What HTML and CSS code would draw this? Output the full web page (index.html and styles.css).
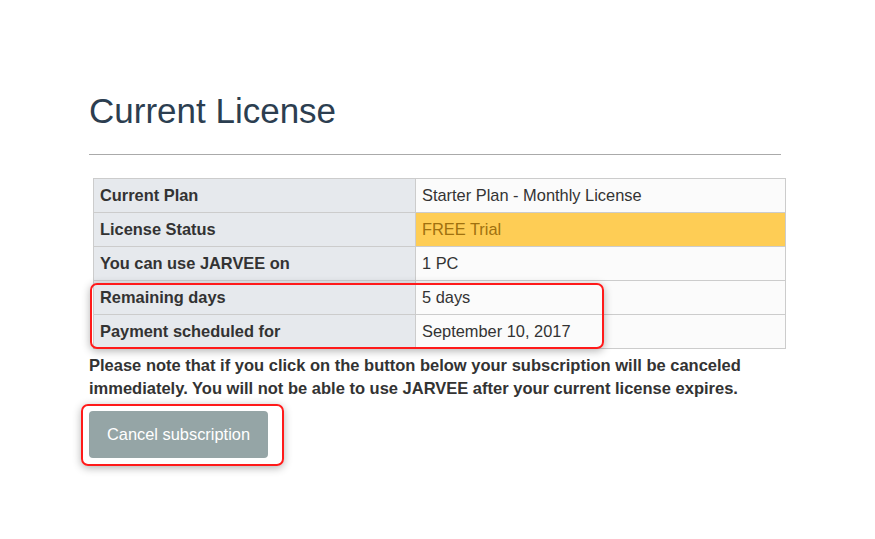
FILE: index.html
```html
<!DOCTYPE html>
<html lang="en">
<head>
  <meta charset="UTF-8">
  <meta name="viewport" content="width=device-width, initial-scale=1.0">
  <title>Current License</title>
  <link rel="stylesheet" href="styles.css">
</head>
<body>
  <div class="page">
    <h1>Current License</h1>
    <hr class="rule">

    <table class="license">
      <tbody>
        <tr>
          <th>Current Plan</th>
          <td>Starter Plan - Monthly License</td>
        </tr>
        <tr>
          <th>License Status</th>
          <td class="status-trial">FREE Trial</td>
        </tr>
        <tr>
          <th>You can use JARVEE on</th>
          <td>1 PC</td>
        </tr>
        <tr>
          <th>Remaining days</th>
          <td>5 days</td>
        </tr>
        <tr>
          <th>Payment scheduled for</th>
          <td>September 10, 2017</td>
        </tr>
      </tbody>
    </table>

    <p class="note">Please note that if you click on the button below your subscription will be canceled immediately. You will not be able to use JARVEE after your current license expires.</p>

    <button type="button" class="btn-cancel">Cancel subscription</button>

    <!-- highlight frames drawn over the content -->
    <div class="mark mark-rows"></div>
    <div class="mark mark-button"></div>
  </div>
</body>
</html>
```

FILE: styles.css
```css
html,
body {
  min-height: 100%;
}

body {
  margin: 0;
  min-height: 539px;
  background: #fff;
  color: #333;
  font-family: "Liberation Sans", Arial, sans-serif;
}

.page {
  position: relative;
  min-height: 450px;
  padding: 90px 0 0 89px;
  width: 697px;
}

h1 {
  margin: 0;
  font-size: 35px;
  font-weight: normal;
  line-height: 42px;
  color: #2c3e50;
}

.rule {
  margin: 22px 0 23px 0;
  width: 692px;
  border: 0;
  border-top: 1px solid #aaa;
}

.license {
  margin-left: 4px;
  width: 693px;
  border-collapse: collapse;
  font-size: 16.4px;
}

.license th,
.license td {
  height: 33px;
  padding: 0 6px;
  border: 1px solid #ccc;
  text-align: left;
  vertical-align: middle;
}

.license th {
  width: 309px;
  background: #e6e9ed;
  font-weight: bold;
  color: #333;
}

.license td {
  background: #fbfbfb;
  color: #333;
}

.license td.status-trial {
  background: #fecd55;
  color: #a0710f;
}

.note {
  margin: 5px 0 11px;
  font-size: 16.5px;
  font-weight: bold;
  line-height: 23px;
  color: #333;
}

.btn-cancel {
  width: 179px;
  height: 47px;
  padding: 0;
  border: none;
  border-radius: 4px;
  background: #95a5a6;
  color: #fff;
  font-family: inherit;
  font-size: 16.4px;
  cursor: pointer;
}

.mark {
  position: absolute;
  border: 2px solid #ff1a1a;
  border-radius: 7px;
  box-shadow: 0 2px 8px rgba(0, 0, 0, 0.3);
}

.mark-rows {
  left: 90px;
  top: 283px;
  width: 510px;
  height: 62px;
}

.mark-button {
  left: 81px;
  top: 404px;
  width: 199px;
  height: 58px;
}
```
